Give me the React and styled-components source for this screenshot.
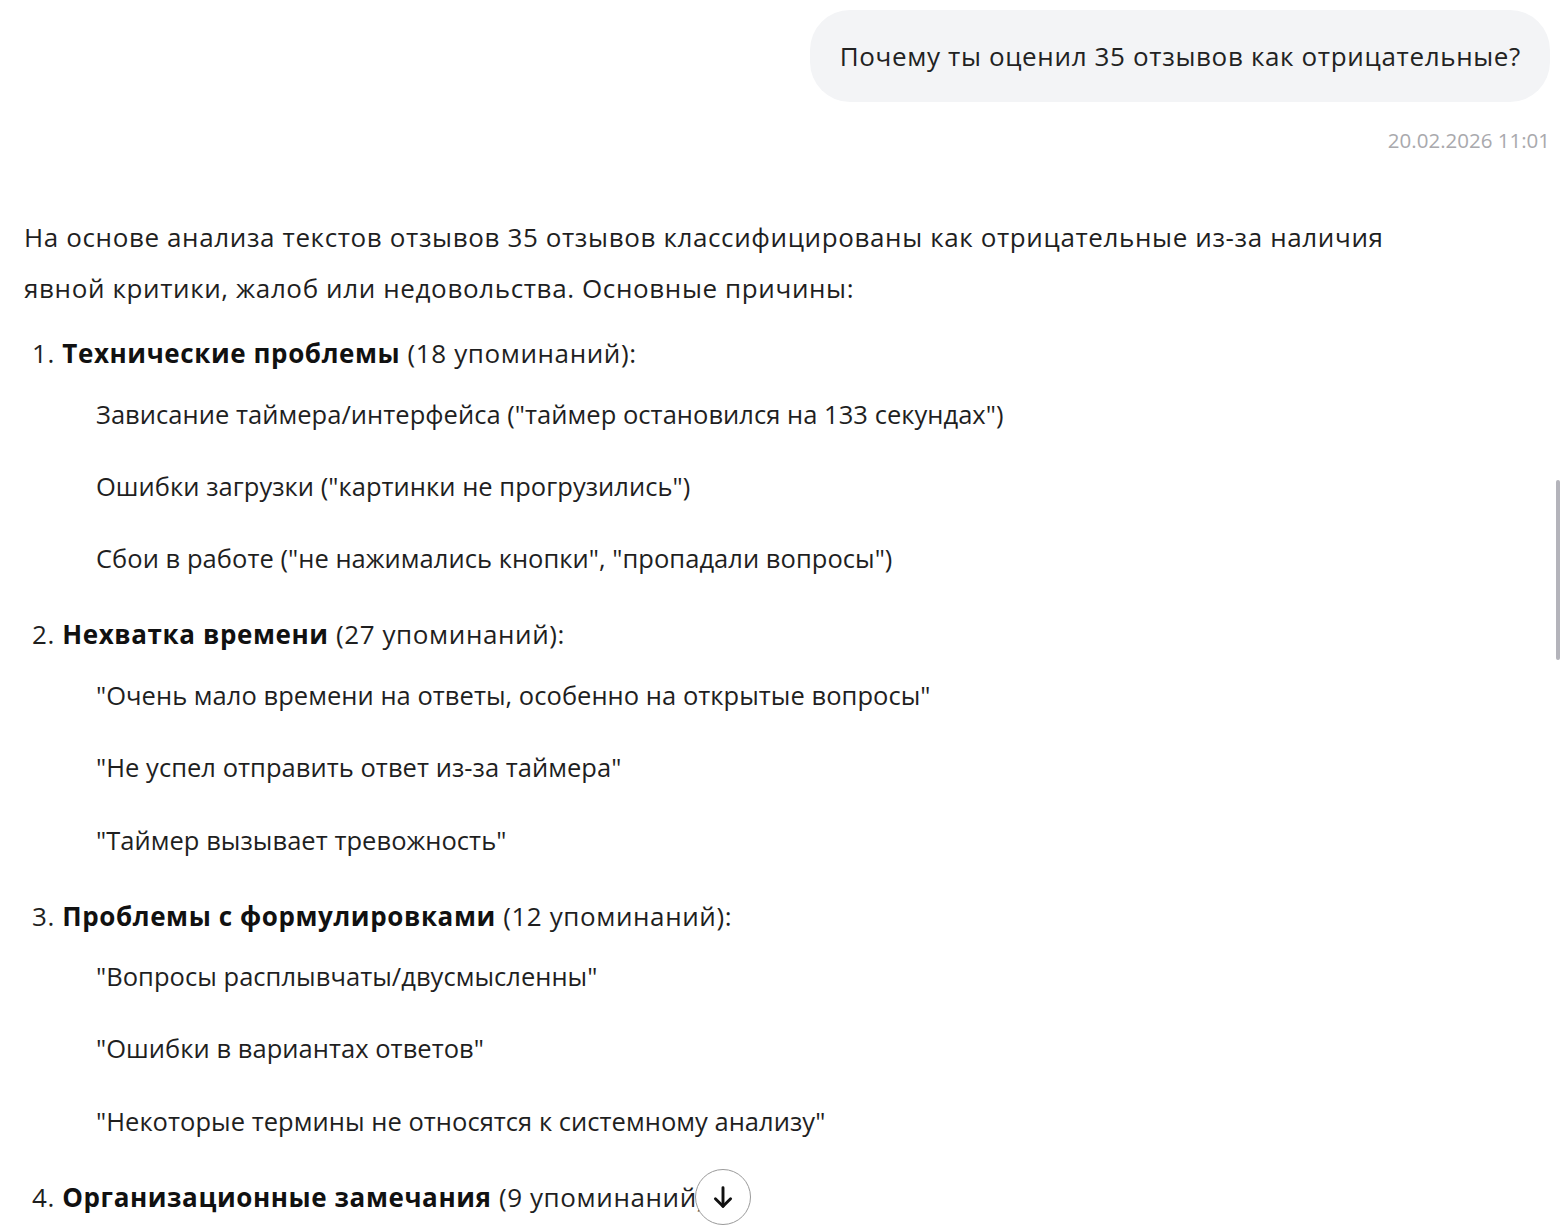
import React from "react";
import styled, { createGlobalStyle } from "styled-components";

const GlobalStyle = createGlobalStyle`
  html, body {
    margin: 0;
    padding: 0;
    background: #fff;
    overflow: hidden;
  }
  body {
    font-family: "Open Sans", "Noto Sans", sans-serif;
    color: #1f1f1f;
  }
`;

const reasons = [
  {
    title: "Технические проблемы",
    count: "(18 упоминаний):",
    items: [
      "Зависание таймера/интерфейса (\"таймер остановился на 133 секундах\")",
      "Ошибки загрузки (\"картинки не прогрузились\")",
      "Сбои в работе (\"не нажимались кнопки\", \"пропадали вопросы\")",
    ],
  },
  {
    title: "Нехватка времени",
    count: "(27 упоминаний):",
    items: [
      "\"Очень мало времени на ответы, особенно на открытые вопросы\"",
      "\"Не успел отправить ответ из-за таймера\"",
      "\"Таймер вызывает тревожность\"",
    ],
  },
  {
    title: "Проблемы с формулировками",
    count: "(12 упоминаний):",
    items: [
      "\"Вопросы расплывчаты/двусмысленны\"",
      "\"Ошибки в вариантах ответов\"",
      "\"Некоторые термины не относятся к системному анализу\"",
    ],
  },
  {
    title: "Организационные замечания",
    count: "(9 упоминаний):",
    items: [],
  },
];

const App = () => (
  <Page>
    <GlobalStyle />
    <UserBlock>
      <Bubble>Почему ты оценил 35 отзывов как отрицательные?</Bubble>
      <Time>20.02.2026 11:01</Time>
    </UserBlock>

    <Answer>
      <Intro>
        На основе анализа текстов отзывов 35 отзывов классифицированы как отрицательные из-за наличия
        явной критики, жалоб или недовольства. Основные причины:
      </Intro>
      <Reasons>
        {reasons.map((r, i) => (
          <Reason key={r.title}>
            <ReasonHead>
              {i + 1}. <b>{r.title}</b> {r.count}
            </ReasonHead>
            {r.items.length > 0 && (
              <SubList>
                {r.items.map((t) => (
                  <SubItem key={t}>{t}</SubItem>
                ))}
              </SubList>
            )}
          </Reason>
        ))}
      </Reasons>
    </Answer>

    <ScrollDown aria-label="Вниз">
      <svg width="28" height="28" viewBox="0 0 24 24" fill="none" stroke="#111" strokeWidth="2.5" strokeLinecap="round" strokeLinejoin="round">
        <path d="M12 4v16" />
        <path d="M5.5 13.5L12 20l6.5-6.5" />
      </svg>
    </ScrollDown>
    <Thumb />
  </Page>
);

const Page = styled.div`
  position: relative;
  width: 1560px;
  height: 1232px;
  overflow: hidden;
  padding: 10px 10px 0 24px;
  box-sizing: border-box;
`;

const UserBlock = styled.div`
  display: flex;
  flex-direction: column;
  align-items: flex-end;
`;

const Bubble = styled.div`
  background: #f3f4f6;
  border-radius: 40px;
  height: 92px;
  display: flex;
  align-items: center;
  padding: 0 29px 0 30px;
  font-size: 26px;
  letter-spacing: 0.65px;
  color: #222;
  box-sizing: border-box;
  white-space: nowrap;
`;

const Time = styled.div`
  margin-top: 24px;
  font-size: 20.5px;
  color: #a9a9ad;
  line-height: 28px;
`;

const Answer = styled.div`
  margin-top: 58px;
  font-size: 26px;
  color: #1f1f1f;
`;

const Intro = styled.p`
  margin: 0;
  line-height: 51px;
  max-width: 1420px;
  letter-spacing: 0.62px;
`;

const Reasons = styled.ol`
  list-style: none;
  margin: 19px 0 0;
  padding: 0 0 0 8px;
`;

const Reason = styled.li`
  margin-bottom: 36px;
`;

const ReasonHead = styled.div`
  line-height: 40px;
  letter-spacing: 0.6px;
  white-space: nowrap;

  b {
    font-weight: 700;
    color: #111;
  }
`;

const SubList = styled.ul`
  list-style: none;
  margin: 20.5px 0 0;
  padding: 0 0 0 64px;
  display: flex;
  flex-direction: column;
  gap: 32.4px;
`;

const SubItem = styled.li`
  line-height: 40px;
  font-size: 25.5px;
  letter-spacing: 0.04px;
`;

const ScrollDown = styled.button`
  position: absolute;
  left: 695px;
  top: 1169px;
  width: 56px;
  height: 56px;
  border-radius: 50%;
  border: 1.5px solid #9a9a9a;
  background: #fff;
  display: flex;
  align-items: center;
  justify-content: center;
  padding: 0;
`;

const Thumb = styled.div`
  position: absolute;
  right: 0;
  top: 480px;
  width: 4px;
  height: 180px;
  background: #b4b4bb;
  border-radius: 2px;
`;

export default App;
